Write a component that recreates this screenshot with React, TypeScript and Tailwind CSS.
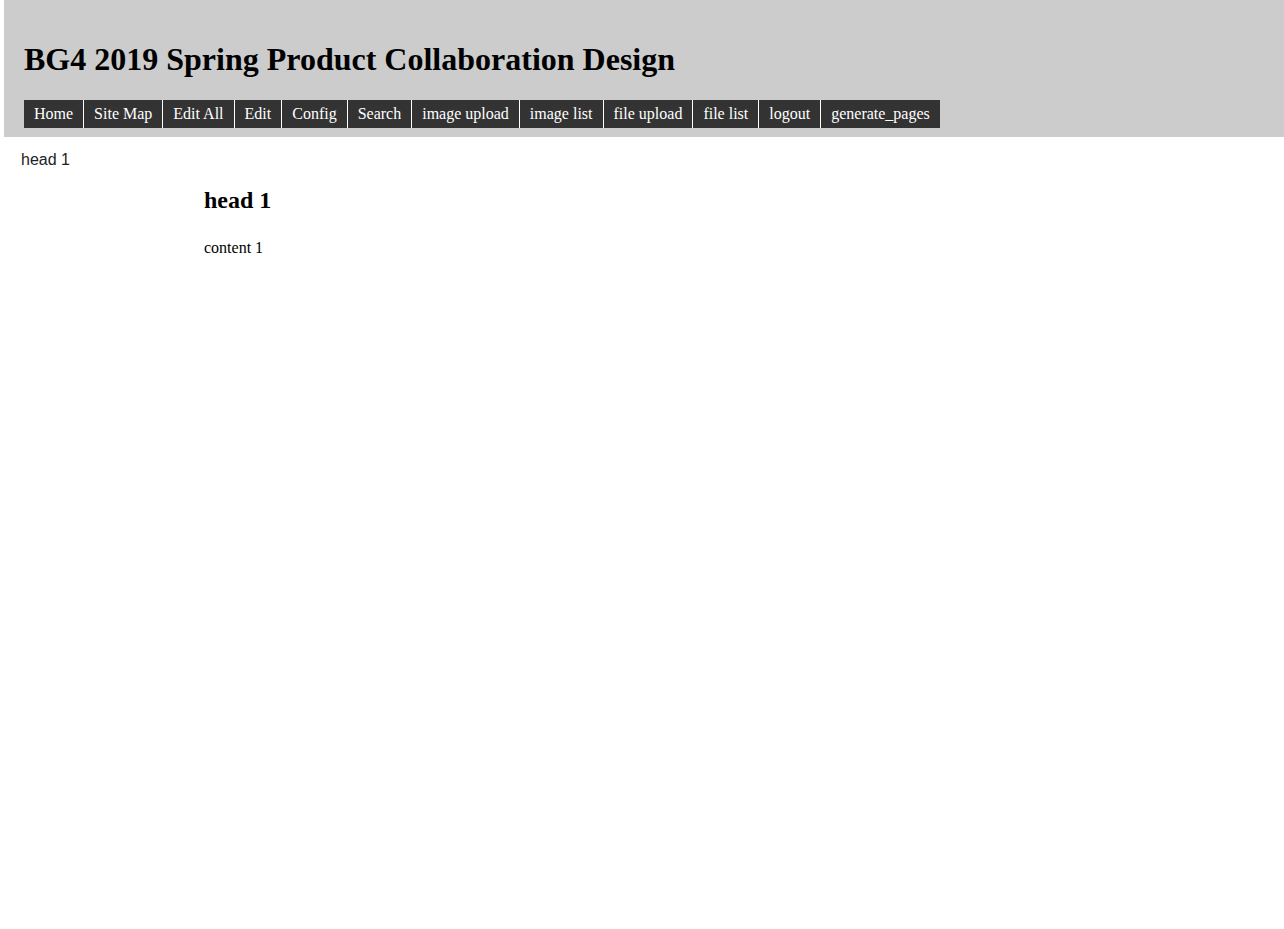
const navItems = [
  'Home',
  'Site Map',
  'Edit All',
  'Edit',
  'Config',
  'Search',
  'image upload',
  'image list',
  'file upload',
  'file list',
  'logout',
  'generate_pages',
];

export default function App() {
  return (
    <div className="min-h-screen w-full bg-white font-['Liberation_Serif','Times_New_Roman',serif] text-black">
      {/* Header */}
      <header className="ml-[4px] bg-[#cccccc] px-[20px] pt-[20px] pb-[9px]">
        <h1 className="mt-[21px] mb-[22px] text-[32px] font-bold leading-[37px]">
          BG4 2019 Spring Product Collaboration Design
        </h1>
        <nav>
          <ul className="flex">
            {navItems.map((item, i) => (
              <li
                key={item}
                className={
                  i === 0
                    ? 'bg-[#333333] px-[10px] py-[5px] text-[16px] leading-[18px] text-white'
                    : 'border-l border-white bg-[#333333] px-[10px] py-[5px] text-[16px] leading-[18px] text-white'
                }
              >
                {item}
              </li>
            ))}
          </ul>
        </nav>
      </header>

      {/* Body */}
      <div className="flex">
        <aside className="w-[204px] shrink-0 pl-[21px] pt-[11px]">
          <a className="font-['Liberation_Sans',Arial,sans-serif] text-[16px] leading-[18px] text-[#222222]">
            head 1
          </a>
        </aside>
        <main className="pt-[50px]">
          <h2 className="text-[24px] font-bold leading-[27px]">head 1</h2>
          <p className="mt-[25px] text-[16px] leading-[18px]">content 1</p>
        </main>
      </div>
    </div>
  );
}
